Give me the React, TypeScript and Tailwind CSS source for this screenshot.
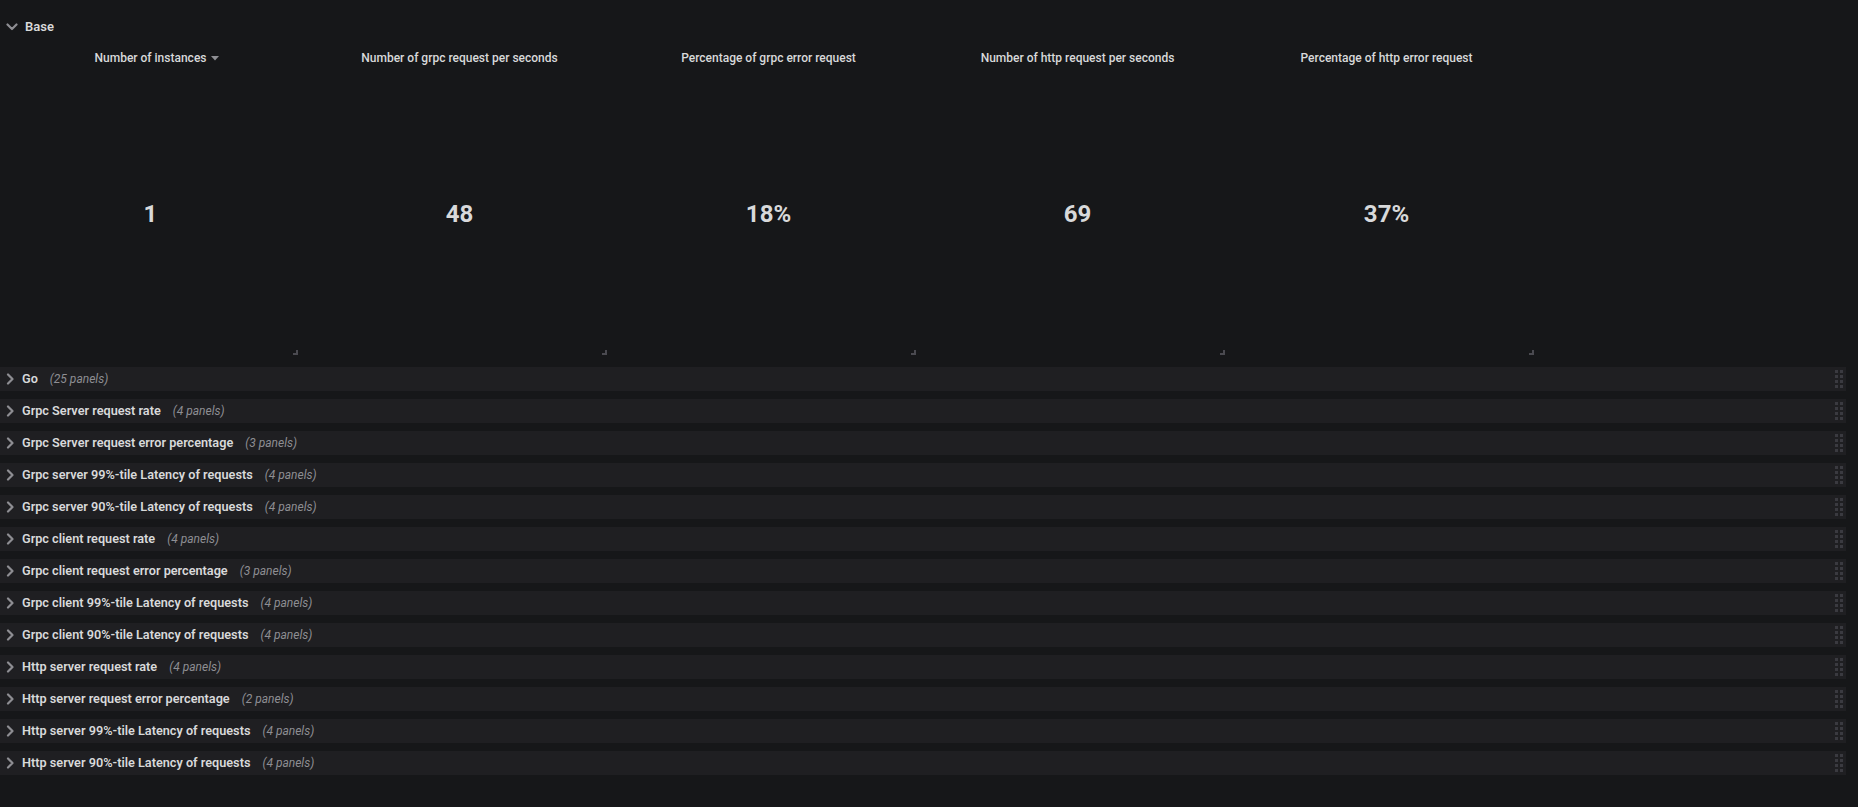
import React from 'react';

// Stat panels shown in the expanded "Base" row
const stats = [
  { title: 'Number of instances', value: '1', menu: true },
  { title: 'Number of grpc request per seconds', value: '48' },
  { title: 'Percentage of grpc error request', value: '18%' },
  { title: 'Number of http request per seconds', value: '69' },
  { title: 'Percentage of http error request', value: '37%' },
];

// Collapsed rows below
const rows = [
  { title: 'Go', count: 25 },
  { title: 'Grpc Server request rate', count: 4 },
  { title: 'Grpc Server request error percentage', count: 3 },
  { title: 'Grpc server 99%-tile Latency of requests', count: 4 },
  { title: 'Grpc server 90%-tile Latency of requests', count: 4 },
  { title: 'Grpc client request rate', count: 4 },
  { title: 'Grpc client request error percentage', count: 3 },
  { title: 'Grpc client 99%-tile Latency of requests', count: 4 },
  { title: 'Grpc client 90%-tile Latency of requests', count: 4 },
  { title: 'Http server request rate', count: 4 },
  { title: 'Http server request error percentage', count: 2 },
  { title: 'Http server 99%-tile Latency of requests', count: 4 },
  { title: 'Http server 90%-tile Latency of requests', count: 4 },
];

const ChevronRight = () => (
  <svg width="8" height="12" viewBox="0 0 8 12" className="shrink-0">
    <path d="M2 1.5 L6.5 6 L2 10.5" fill="none" stroke="#8e8e93" strokeWidth="2.2" strokeLinecap="round" strokeLinejoin="round" />
  </svg>
);

const ChevronDown = () => (
  <svg width="12" height="8" viewBox="0 0 12 8" className="shrink-0">
    <path d="M1.5 1.5 L6 6 L10.5 1.5" fill="none" stroke="#8e8e93" strokeWidth="2.2" strokeLinecap="round" strokeLinejoin="round" />
  </svg>
);

const DragHandle = () => (
  <div className="grid grid-cols-2 gap-[2px]">
    {Array.from({ length: 8 }).map((_, i) => (
      <span key={i} className="block h-[3px] w-[3px] bg-[#3a3a40]" />
    ))}
  </div>
);

function StatPanel({ title, value, menu }: { title: string; value: string; menu?: boolean }) {
  return (
    <div className="relative flex h-[319px] flex-col">
      <div className="flex h-9 items-center justify-center">
        <span className="relative text-[12px] font-medium text-[#d8d9da]">
          {title}
          {menu && (
            <svg width="8" height="5" viewBox="0 0 8 5" className="absolute top-[7px] -right-[12px]">
              <path d="M0 0 L8 0 L4 4.5 Z" fill="#8e8e93" />
            </svg>
          )}
        </span>
      </div>
      <div className="flex flex-1 items-center justify-center pb-2">
        <span className="text-[24px] font-bold leading-none text-[#d8d9da]">{value}</span>
      </div>
      <svg width="5" height="5" viewBox="0 0 5 5" className="absolute right-[3px] bottom-[4px]">
        <path d="M5 0 L5 5 L0 5 L0 3 L3 3 L3 0 Z" fill="#4a4a50" />
      </svg>
    </div>
  );
}

export default function App() {
  return (
    <div
      className="min-h-[807px] w-[1858px] bg-[#161719] pt-[14px] text-[#d8d9da]"
      style={{ fontFamily: 'Roboto, "Liberation Sans", sans-serif' }}
    >
      <div className="w-[1846px]">
        {/* Expanded Base row */}
        <div className="flex h-[26px] items-center gap-[7px] pl-[6px]">
          <ChevronDown />
          <span className="text-[13px] font-semibold text-[#d8d9da]">Base</span>
        </div>

        <div className="grid grid-cols-6 gap-2">
          {stats.map((s) => (
            <StatPanel key={s.title} {...s} />
          ))}
        </div>

        {/* Collapsed rows */}
        <div className="mt-2 flex flex-col gap-2">
          {rows.map((r) => (
            <div key={r.title} className="flex h-6 items-center bg-[#1f1f22] pr-[3px] pl-[6px]">
              <ChevronRight />
              <span className="ml-[8px] text-[12.7px] font-semibold text-[#d8d9da]">{r.title}</span>
              <span className="ml-3 text-[12px] italic text-[#8e8e93]">({r.count} panels)</span>
              <div className="ml-auto">
                <DragHandle />
              </div>
            </div>
          ))}
        </div>
      </div>
    </div>
  );
}
